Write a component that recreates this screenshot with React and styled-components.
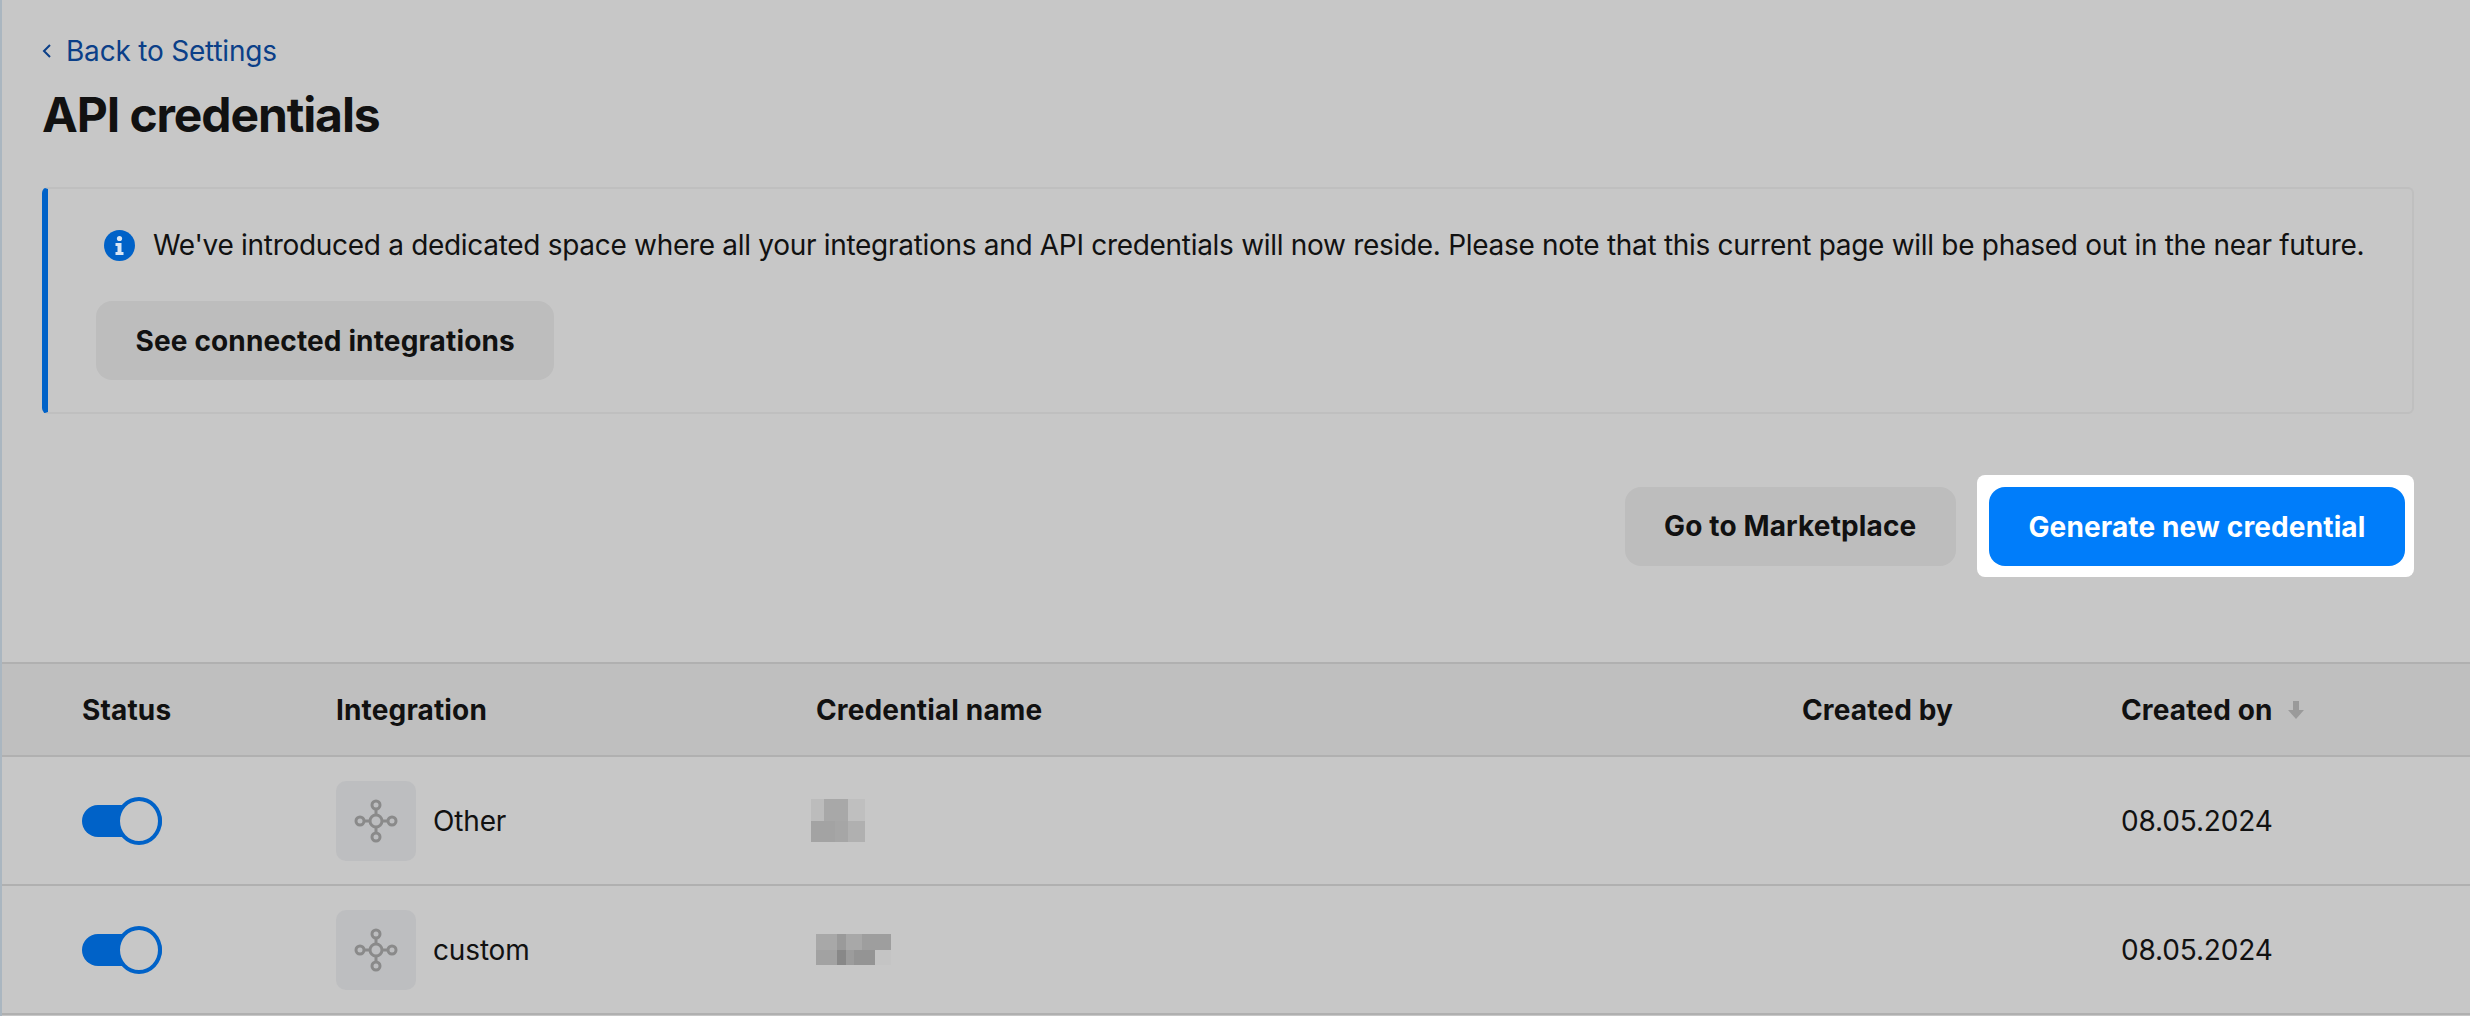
import React from "react";
import styled, { createGlobalStyle } from "styled-components";

const GlobalStyle = createGlobalStyle`
  html, body {
    margin: 0;
    padding: 0;
    background: #c7c7c7;
  }
  body {
    font-family: Inter, "Liberation Sans", sans-serif;
    color: #111;
  }
`;

const Page = styled.div`
  box-sizing: border-box;
  height: 1016px;
  overflow: hidden;
  border-left: 2px solid #aab6c0;
  background: #c7c7c7;
`;

const Head = styled.div`
  padding: 33px 56px 0 40px;
`;

const BackLink = styled.a`
  display: flex;
  align-items: center;
  gap: 14px;
  height: 36px;
  font-size: 28px;
  line-height: 36px;
  letter-spacing: -0.2px;
  color: #0b3f88;
`;

const Title = styled.h1`
  margin: 18px 0 0;
  font-size: 48px;
  line-height: 56px;
  font-weight: 700;
  letter-spacing: -1.1px;
  color: #111;
`;

const Banner = styled.div`
  box-sizing: border-box;
  height: 227px;
  margin-top: 44px;
  padding: 39px 0 0 48px;
  border: 2px solid #bfbfbf;
  border-left: 6px solid #0062c8;
  border-radius: 6px;
`;

const Notice = styled.div`
  display: flex;
  align-items: center;
  gap: 18px;
  padding-left: 8px;
  height: 34px;
  font-size: 28px;
  line-height: 34px;
  letter-spacing: -0.3px;
  color: #111;
  white-space: nowrap;
`;

const Button = styled.button`
  box-sizing: border-box;
  height: 79px;
  padding: 0 39.5px;
  border: 0;
  border-radius: 16px;
  font-family: inherit;
  font-size: 28px;
  font-weight: 700;
  letter-spacing: 0.14px;
  background: ${props => (props.primary ? "#007dfa" : "#bdbdbd")};
  color: ${props => (props.primary ? "#fff" : "#111")};
`;

const BannerAction = styled.div`
  margin-top: 39px;
`;

const Actions = styled.div`
  display: flex;
  justify-content: flex-end;
  align-items: center;
  gap: 21px;
  margin-top: 61px;
`;

const Highlight = styled.div`
  padding: 12px 9px 11px 12px;
  background: #fff;
  border-radius: 8px;
`;

const Table = styled.div`
  margin-top: 85px;
`;

const Row = styled.div`
  display: grid;
  grid-template-columns: 334px 480px 986px 319px 1fr;
  align-items: center;
  box-sizing: border-box;
  height: ${props => (props.header ? "95px" : "129px")};
  border-bottom: 2px solid #b0b0b0;
  border-top: ${props => (props.header ? "2px solid #b0b0b0" : "0")};
  background: ${props => (props.header ? "#bfbfbf" : "transparent")};
  font-weight: ${props => (props.header ? 700 : 400)};
  font-size: 28px;
  letter-spacing: ${props => (props.header ? "0.15px" : "-0.15px")};
  color: #111;
`;

const Cell = styled.div`
  display: flex;
  align-items: center;
  padding-left: ${props => (props.first ? "80px" : "0")};
  gap: ${props => (props.sort ? "15px" : "17px")};
`;

const Toggle = styled.span`
  position: relative;
  display: block;
  width: 80px;
  height: 32px;
  border-radius: 16px;
  background: #0062c8;
`;

const Knob = styled.span`
  position: absolute;
  right: 0;
  top: -8px;
  box-sizing: border-box;
  width: 46px;
  height: 48px;
  border-radius: 50%;
  border: 4px solid #0062c8;
  background: #c7c7c7;
`;

const IconTile = styled.span`
  display: flex;
  align-items: center;
  justify-content: center;
  width: 80px;
  height: 80px;
  border-radius: 10px;
  background: #bdbec0;
`;

// blurred-out credential names, colours sampled per block
const blobs = {
  other: {
    w: 54,
    h: 43,
    x: -5,
    rects: [
      [0, 0, 13, 22, "#bcbcbc"],
      [13, 0, 24, 22, "#a8a8a8"],
      [37, 0, 17, 22, "#bfbfbf"],
      [0, 22, 24, 21, "#a3a3a3"],
      [24, 22, 13, 21, "#a6a6a6"],
      [37, 22, 17, 21, "#b0b0b0"],
    ],
  },
  custom: {
    w: 75,
    h: 31,
    x: 0,
    rects: [
      [0, 0, 21, 16, "#a8a8a8"],
      [21, 0, 9, 16, "#9a9a9a"],
      [30, 0, 16, 16, "#a8a8a8"],
      [46, 0, 29, 16, "#9e9e9e"],
      [0, 16, 21, 15, "#a2a2a2"],
      [21, 16, 9, 15, "#888888"],
      [30, 16, 8, 15, "#9c9c9c"],
      [38, 16, 21, 15, "#949494"],
      [59, 16, 16, 15, "#c4c4c4"],
    ],
  },
};

const BlobSvg = styled.svg`
  display: block;
  margin-left: ${props => props.$x}px;
`;

const Blob = ({ name }) => {
  const b = blobs[name];
  return (
    <BlobSvg $x={b.x} width={b.w} height={b.h} viewBox={`0 0 ${b.w} ${b.h}`} shapeRendering="crispEdges">
      {b.rects.map((r, i) => (
        <rect key={i} x={r[0]} y={r[1]} width={r[2]} height={r[3]} fill={r[4]} />
      ))}
    </BlobSvg>
  );
};

const Chevron = () => (
  <svg width="10" height="16" viewBox="0 0 10 16" fill="none" stroke="#0b3f88" strokeWidth="2">
    <path d="M8 2 L2 8 L8 14" />
  </svg>
);

const InfoIcon = () => (
  <svg width="31" height="31" viewBox="0 0 31 31">
    <circle cx="15.5" cy="15.5" r="15.5" fill="#0062c8" />
    <circle cx="15.5" cy="8.5" r="2.6" fill="#d8e6f5" />
    <path d="M11.5 13 h6 v9 h2 v3 h-8 v-3 h2 v-6 h-2 z" fill="#d8e6f5" />
  </svg>
);

const NodeIcon = () => (
  <svg width="44" height="44" viewBox="0 0 44 44" fill="none" stroke="#8a8a8a" strokeWidth="3">
    <circle cx="22" cy="22" r="6" />
    <circle cx="22" cy="6" r="4" />
    <circle cx="22" cy="38" r="4" />
    <circle cx="6" cy="22" r="4" />
    <circle cx="38" cy="22" r="4" />
    <path d="M22 10 V16 M22 28 V34 M10 22 H16 M28 22 H34" />
  </svg>
);

const SortIcon = () => (
  <svg width="16" height="18" viewBox="0 0 16 18" fill="#9a9a9a">
    <path d="M5 0 h6 v9 h5 l-8 9 l-8 -9 h5 z" />
  </svg>
);

const rows = [
  { name: "Other", blob: "other", date: "08.05.2024" },
  { name: "custom", blob: "custom", date: "08.05.2024" },
];

const App = () => (
  <Page>
    <GlobalStyle />
    <Head>
      <BackLink>
        <Chevron />
        Back to Settings
      </BackLink>
      <Title>API credentials</Title>
      <Banner>
        <Notice>
          <InfoIcon />
          We've introduced a dedicated space where all your integrations and API credentials will now reside. Please note that this current page will be phased out in the near future.
        </Notice>
        <BannerAction>
          <Button>See connected integrations</Button>
        </BannerAction>
      </Banner>
      <Actions>
        <Button>Go to Marketplace</Button>
        <Highlight>
          <Button primary>Generate new credential</Button>
        </Highlight>
      </Actions>
    </Head>
    <Table>
      <Row header>
        <Cell first>Status</Cell>
        <Cell>Integration</Cell>
        <Cell>Credential name</Cell>
        <Cell>Created by</Cell>
        <Cell sort>
          Created on
          <SortIcon />
        </Cell>
      </Row>
      {rows.map(row => (
        <Row key={row.name}>
          <Cell first>
            <Toggle>
              <Knob />
            </Toggle>
          </Cell>
          <Cell>
            <IconTile>
              <NodeIcon />
            </IconTile>
            {row.name}
          </Cell>
          <Cell>
            <Blob name={row.blob} />
          </Cell>
          <Cell />
          <Cell>{row.date}</Cell>
        </Row>
      ))}
    </Table>
  </Page>
);

export default App;
